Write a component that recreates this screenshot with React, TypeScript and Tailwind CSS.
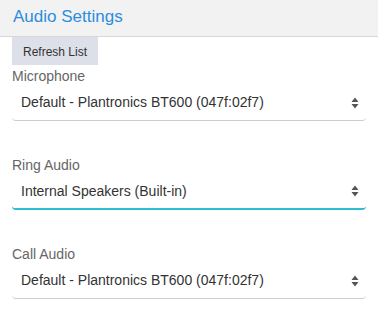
import React from 'react';

function Arrows() {
  return (
    <svg width="8" height="12" viewBox="0 0 8 12" className="text-[#555]" fill="currentColor">
      <path d="M4 0.5 L7.5 5 L0.5 5 Z" />
      <path d="M4 11.5 L7.5 7 L0.5 7 Z" />
    </svg>
  );
}

interface FieldProps {
  label: string;
  value: string;
  focused?: boolean;
}

function Field({ label, value, focused }: FieldProps) {
  return (
    <div className="flex flex-col">
      <div className="text-[14px] leading-[18px] text-[#666]">{label}</div>
      <div
        className={`flex h-9 items-center justify-between rounded-b-[4px] pl-[9px] pr-[7px] ${
          focused ? 'border-b-2 border-[#2cbfd0]' : 'border-b border-[#c8cfd9]'
        }`}
      >
        <span className="text-[14px] text-[#333]">{value}</span>
        <Arrows />
      </div>
    </div>
  );
}

export default function App() {
  return (
    <div className="h-[333px] w-[378px] bg-white font-['Liberation_Sans',Arial,sans-serif]">
      <div className="flex h-[37px] items-center border-b border-[#d8d8d8] bg-[#f2f2f2] pb-[3px] pl-[13px]">
        <h2 className="text-[17px] text-[#2b8de0]">Audio Settings</h2>
      </div>
      <div className="flex flex-col pl-3 pr-3">
        <div className="flex">
          <button className="h-7 bg-[#dde0e8] px-[11px] pt-[2px] text-[12px] text-[#333]">Refresh List</button>
        </div>
        <div className="mt-[2px] flex flex-col gap-[35px]">
          <Field label="Microphone" value="Default - Plantronics BT600 (047f:02f7)" />
          <Field label="Ring Audio" value="Internal Speakers (Built-in)" focused />
          <Field label="Call Audio" value="Default - Plantronics BT600 (047f:02f7)" />
        </div>
      </div>
    </div>
  );
}
